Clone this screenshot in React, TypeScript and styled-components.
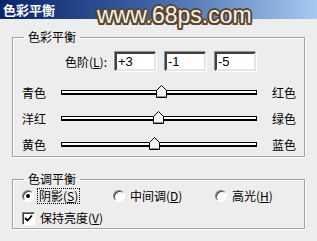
import styled, { createGlobalStyle } from "styled-components"

const GlobalStyle = createGlobalStyle`
  html, body { margin: 0; padding: 0; }
  body {
    width: 317px;
    height: 241px;
    overflow: hidden;
    background: #ededed;
    font-family: "Noto Sans CJK SC", "DejaVu Sans", sans-serif;
    font-size: 12px;
    color: #000;
  }
`

const Dialog = styled.div`
  position: relative;
  width: 317px;
  height: 241px;
  background: #ededed;
`

const TitleBar = styled.div`
  height: 19px;
  line-height: 19px;
  padding-left: 3px;
  background: linear-gradient(to right, #0a246a 0%, #3a5fa0 45%, #a6caf0 100%);
  color: #fff;
  font-weight: 700;
  font-size: 13px;
`

const Watermark = styled.div`
  position: absolute;
  left: 97px;
  top: 4px;
  font-family: "Liberation Sans", Arial, sans-serif;
  font-size: 23px;
  line-height: 22px;
  color: #f6f1e6;
  text-shadow:
    2px 0 #5a4630, -2px 0 #5a4630, 0 2px #5a4630, 0 -2px #5a4630,
    1.5px 1.5px #5a4630, -1.5px 1.5px #5a4630, 1.5px -1.5px #5a4630, -1.5px -1.5px #5a4630;
`

const Body = styled.div`
  padding: 11px 12px 0 12px;
  display: flex;
  flex-direction: column;
  gap: 15px;
`

const Group = styled.fieldset`
  margin: 0;
  padding: 0 0 2px 0;
  min-width: 0;
  border: 1px solid #a0a0a0;
  box-shadow: inset 1px 1px #fff, 1px 1px #fff;
  display: flex;
  flex-direction: column;
`

const Legend = styled.legend`
  margin-left: 11px;
  padding: 0 4px;
  line-height: 14px;
  height: 14px;
`

const LevelRow = styled.div`
  display: flex;
  align-items: center;
  margin-top: 8px;
  gap: 9px;
`

const LevelLabel = styled.span`
  width: 94px;
  text-align: right;
  margin-right: -1px;
`

const Mn = styled.span`
  text-decoration: underline;
`

const NumBox = styled.div`
  box-sizing: border-box;
  width: 41px;
  height: 19px;
  background: #fff;
  border-style: solid;
  border-width: 2px;
  border-color: #404040 #e4e4e4 #e4e4e4 #404040;
  box-shadow: -1px -1px #909090, 1px 1px #fff;
  font-family: "Liberation Sans", Arial, sans-serif;
  font-size: 13px;
  line-height: 15px;
  padding-left: 1px;
`

const Sliders = styled.div`
  display: flex;
  flex-direction: column;
  gap: 6px;
  margin-top: 11px;
`

const SliderRow = styled.div`
  height: 20px;
  display: flex;
  align-items: center;
  padding-left: 9px;
  gap: 15px;
`

const SideLabel = styled.span`
  width: 24px;
  white-space: nowrap;
`

const Track = styled.div`
  position: relative;
  box-sizing: border-box;
  width: 196px;
  height: 5px;
  background: #fff;
  border: 1px solid #000;
  border-bottom-width: 2px;
`

const Thumb = styled.svg`
  position: absolute;
  top: -6px;
  width: 11px;
  height: 13px;
`

const OptionRow = styled.div`
  display: grid;
  grid-template-columns: 91px 102px auto;
  padding-left: 9px;
  margin-top: 2px;
  height: 16px;
  align-items: center;
`

const Option = styled.label`
  display: flex;
  align-items: center;
  gap: 3px;
  white-space: nowrap;
`

const Radio = styled.span<{ $on?: boolean }>`
  position: relative;
  box-sizing: border-box;
  width: 12px;
  height: 12px;
  border-radius: 50%;
  background: #fff;
  border: 1px solid;
  border-color: #808080 #fff #fff #808080;
  box-shadow: inset 1px 1px #404040;
  &::after {
    content: "";
    display: ${p => (p.$on ? "block" : "none")};
    position: absolute;
    left: 3px;
    top: 3px;
    width: 4px;
    height: 4px;
    border-radius: 50%;
    background: #000;
  }
`

const OptText = styled.span<{ $focus?: boolean }>`
  padding: 0 1px;
  margin-left: 1px;
  line-height: 14px;
  outline: ${p => (p.$focus ? "1px dotted #000" : "none")};
`

const CheckRow = styled.div`
  display: flex;
  align-items: center;
  padding-left: 9px;
  margin-top: 6px;
  height: 16px;
  gap: 3px;
`

const CheckBox = styled.span`
  box-sizing: border-box;
  width: 13px;
  height: 13px;
  background: #fff;
  border: 1px solid;
  border-color: #808080 #fff #fff #808080;
  box-shadow: inset 1px 1px #404040;
  display: flex;
  align-items: center;
  justify-content: center;
`

const sliders = [
  { left: "青色", right: "红色", value: 3 },
  { left: "洋红", right: "绿色", value: -1 },
  { left: "黄色", right: "蓝色", value: -5 },
]

const Slider = ({ value }: { value: number }) => {
  const x = ((value + 100) / 200) * 194
  return (
    <Track>
      <Thumb style={{ left: x - 5.5 }} viewBox="0 0 11 13">
        <polygon points="0.5,5.5 5.5,0.5 10.5,5.5 10.5,12.5 0.5,12.5" fill="#f4f4f4" stroke="#000" />
        <line x1="1.5" y1="11.5" x2="9.5" y2="11.5" stroke="#909090" />
      </Thumb>
    </Track>
  )
}

export default function App() {
  return (
    <Dialog>
      <GlobalStyle />
      <TitleBar>色彩平衡</TitleBar>
      <Watermark>www.68ps.com</Watermark>
      <Body>
        <Group>
          <Legend>色彩平衡</Legend>
          <LevelRow>
            <LevelLabel>色阶(<Mn>L</Mn>):</LevelLabel>
            <NumBox>+3</NumBox>
            <NumBox>-1</NumBox>
            <NumBox>-5</NumBox>
          </LevelRow>
          <Sliders>
            {sliders.map(s => (
              <SliderRow key={s.left}>
                <SideLabel>{s.left}</SideLabel>
                <Slider value={s.value} />
                <SideLabel>{s.right}</SideLabel>
              </SliderRow>
            ))}
          </Sliders>
        </Group>
        <Group>
          <Legend>色调平衡</Legend>
          <OptionRow>
            <Option><Radio $on /><OptText $focus>阴影(<Mn>S</Mn>)</OptText></Option>
            <Option><Radio /><OptText>中间调(<Mn>D</Mn>)</OptText></Option>
            <Option><Radio /><OptText>高光(<Mn>H</Mn>)</OptText></Option>
          </OptionRow>
          <CheckRow>
            <CheckBox>
              <svg width="9" height="9" viewBox="0 0 9 9">
                <path d="M1 4 L3.5 6.5 L8 1.5" fill="none" stroke="#000" strokeWidth="1.8" />
              </svg>
            </CheckBox>
            <OptText>保持亮度(<Mn>V</Mn>)</OptText>
          </CheckRow>
        </Group>
      </Body>
    </Dialog>
  )
}
